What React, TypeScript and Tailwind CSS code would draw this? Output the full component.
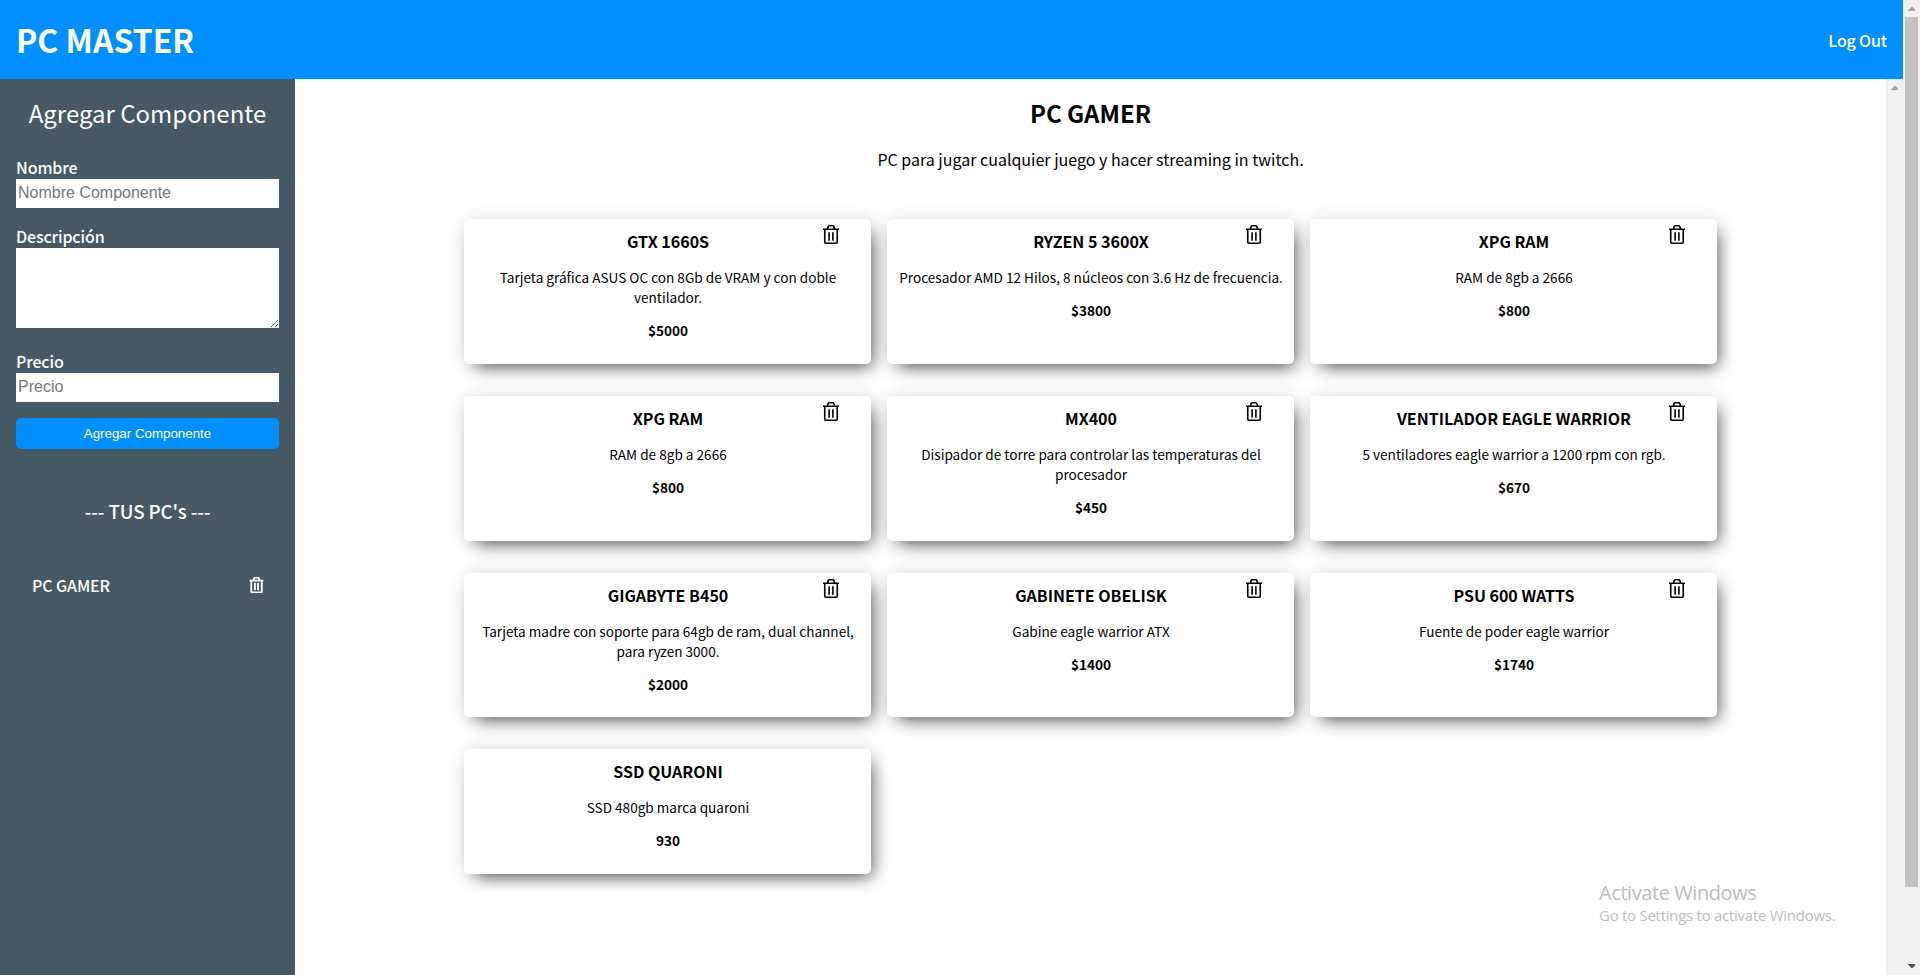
import React from 'react';

type Component = { name: string; text: string[]; price: string; removable?: boolean };

const components: Component[] = [
  { name: 'GTX 1660S', text: ['Tarjeta gráfica ASUS OC con 8Gb de VRAM y con doble', 'ventilador.'], price: '$5000', removable: true },
  { name: 'RYZEN 5 3600X', text: ['Procesador AMD 12 Hilos, 8 núcleos con 3.6 Hz de frecuencia.'], price: '$3800', removable: true },
  { name: 'XPG RAM', text: ['RAM de 8gb a 2666'], price: '$800', removable: true },
  { name: 'XPG RAM', text: ['RAM de 8gb a 2666'], price: '$800', removable: true },
  { name: 'MX400', text: ['Disipador de torre para controlar las temperaturas del', 'procesador'], price: '$450', removable: true },
  { name: 'VENTILADOR EAGLE WARRIOR', text: ['5 ventiladores eagle warrior a 1200 rpm con rgb.'], price: '$670', removable: true },
  { name: 'GIGABYTE B450', text: ['Tarjeta madre con soporte para 64gb de ram, dual channel,', 'para ryzen 3000.'], price: '$2000', removable: true },
  { name: 'GABINETE OBELISK', text: ['Gabine eagle warrior ATX'], price: '$1400', removable: true },
  { name: 'PSU 600 WATTS', text: ['Fuente de poder eagle warrior'], price: '$1740', removable: true },
  { name: 'SSD QUARONI', text: ['SSD 480gb marca quaroni'], price: '930' },
];

function Trash({ className }: { className: string }) {
  return (
    <svg viewBox="0 0 16 19" className={className} fill="none" stroke="currentColor" strokeWidth="1.6">
      <path d="M0 4.25H16M4.25 4L5.3 1.4Q5.5 .8 6.1 .8H9.9Q10.5 .8 10.7 1.4L11.75 4" />
      <path d="M1.75 4.25V17.2Q1.75 18.2 2.75 18.2H13.25Q14.25 18.2 14.25 17.2V4.25M6.1 7.2V15.8M9.9 7.2V15.8" />
    </svg>
  );
}

function Card({ item }: { item: Component }) {
  return (
    <article className={`relative flex flex-col items-center rounded-[5px] bg-white pl-px text-center shadow-[6px_8px_17px_-6px_rgba(0,0,0,0.7),0_0_20px_rgba(0,0,0,0.1)] ${item.removable ? 'h-[144.83px]' : 'h-[124.83px]'}`}>
      <h3 className="mt-[10px] h-6 text-base leading-6 font-bold whitespace-nowrap">{item.name}</h3>
      <div className="mt-[14px] text-[13.6px] leading-5 whitespace-nowrap">
        {item.text.map((line) => <p key={line}>{line}</p>)}
      </div>
      <p className="mt-[13px] text-[13.6px] leading-5 font-bold">{item.price}</p>
      {item.removable && <Trash className="absolute top-[6px] right-8 h-[19px] w-4" />}
    </article>
  );
}

export default function App() {
  return (
    <div className="flex h-[975px] w-[1920px] overflow-hidden bg-white font-['Noto_Sans_CJK_JP',sans-serif] text-black">
      <div className="flex w-[1903px] flex-col">
        <header className="flex h-[79px] shrink-0 items-center justify-between bg-[#008fff] px-4 text-white">
          <h1 className="pb-[2px] text-[32px] leading-[46px] font-bold">PC MASTER</h1>
          <a className="text-base font-medium tracking-[-0.15px]">Log Out</a>
        </header>
        <div className="flex min-h-0 flex-1">
          <aside className="flex w-[295px] shrink-0 flex-col bg-[#455a64] px-4 text-white">
            <h2 className="mt-4 text-center text-2xl leading-9 whitespace-nowrap">Agregar Componente</h2>
            <label className="mt-6 h-6 text-base leading-6 font-medium tracking-[-0.1px]">Nombre</label>
            <input className="h-[29px] w-full bg-white px-0.5 pb-0.5 font-['Liberation_Sans',sans-serif] text-base text-black outline-none placeholder:text-[#757575]" placeholder="Nombre Componente" />
            <label className="mt-4 h-6 text-base leading-6 font-medium tracking-[-0.15px]">Descripción</label>
            <textarea className="block h-20 w-full resize bg-white" />
            <label className="mt-[21px] h-6 text-base leading-6 font-medium tracking-[-0.15px]">Precio</label>
            <input className="h-[29px] w-full bg-white px-0.5 pb-0.5 font-['Liberation_Sans',sans-serif] text-base text-black outline-none placeholder:text-[#757575]" placeholder="Precio" />
            <button className="mt-4 h-[31px] w-full rounded-[5px] bg-[#008fff] font-['Liberation_Sans',sans-serif] text-[13.333px]">Agregar Componente</button>
            <h3 className="mt-[47px] text-center text-[18.72px] leading-[30px] font-medium tracking-[-0.1px]">--- TUS PC's ---</h3>
            <div className="mt-[47px] flex items-center justify-between pr-[15px] pl-4">
              <span className="text-base leading-6 font-medium tracking-[-0.1px]">PC GAMER</span>
              <Trash className="h-4 w-[15px] stroke-[2.2]" />
            </div>
          </aside>
          <main className="flex flex-1 flex-col items-center">
            <h2 className="mt-[14px] text-2xl leading-10 font-bold">PC GAMER</h2>
            <p className="mt-[14px] text-base leading-6">PC para jugar cualquier juego y hacer streaming in twitch.</p>
            <section className="mt-12 grid w-[1253px] grid-cols-3 items-start gap-x-4 gap-y-8">
              {components.map((item, i) => <Card key={i} item={item} />)}
            </section>
          </main>
          <div className="flex w-[17px] shrink-0 flex-col items-center bg-[#f0f0f0] pt-[7px]">
            <svg className="h-4 w-[7px]" viewBox="0 0 7 16" shapeRendering="crispEdges"><path d="M0 4V3L3 0H4L7 3V4Z" fill="#a3a3a3" /></svg>
          </div>
        </div>
      </div>
      <div className="flex w-[17px] flex-col items-center bg-[#f0f0f0] pt-[7px]">
        <svg className="h-[4px] w-[7px]" viewBox="0 0 7 4" shapeRendering="crispEdges"><path d="M0 4V3L3 0H4L7 3V4Z" fill="#a3a3a3" /></svg>
        <div className="mt-[6px] h-[870px] w-[13px] bg-[#c1c1c1]" />
        <svg className="mt-[77px] h-[4px] w-[7px]" viewBox="0 0 7 4" shapeRendering="crispEdges"><path d="M0 0V1L3 4H4L7 1V0Z" fill="#505050" /></svg>
      </div>
      <div className="absolute top-[879px] left-[1599px] font-['Open_Sans',sans-serif] whitespace-nowrap text-[#bdbdbd]">
        <p className="text-[20px] leading-7 tracking-[-0.42px]">Activate Windows</p>
        <p className="-mt-0.5 text-[15px] leading-5 tracking-[-0.27px]">Go to Settings to activate Windows.</p>
      </div>
    </div>
  );
}
